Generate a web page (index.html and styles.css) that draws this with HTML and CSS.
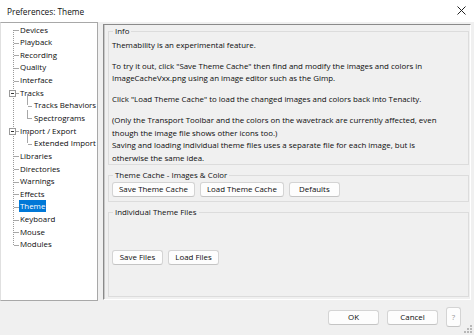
FILE: index.html
```html
<!DOCTYPE html>
<html>
<head>
<meta charset="utf-8">
<link rel="stylesheet" href="styles.css">
</head>
<body>
<div class="window">
  <div class="titlebar">
    <span class="title">Preferences: Theme</span>
    <svg class="close" width="9" height="9" viewBox="0 0 9 9"><path d="M0.5 0.5 L8.5 8.5 M8.5 0.5 L0.5 8.5" stroke="#222" stroke-width="1" fill="none"/></svg>
  </div>
  <div class="main">
    <div class="tree">
      <div class="list">
        <div class="item"><span class="lbl">Devices</span></div>
        <div class="item"><span class="lbl">Playback</span></div>
        <div class="item"><span class="lbl">Recording</span></div>
        <div class="item"><span class="lbl">Quality</span></div>
        <div class="item"><span class="lbl">Interface</span></div>
        <div class="item parent"><span class="box"></span><span class="lbl">Tracks</span></div>
        <div class="kids">
          <div class="item kid"><span class="lbl">Tracks Behaviors</span></div>
          <div class="item kid"><span class="lbl">Spectrograms</span></div>
        </div>
        <div class="item parent"><span class="box"></span><span class="lbl">Import / Export</span></div>
        <div class="kids">
          <div class="item kid"><span class="lbl">Extended Import</span></div>
        </div>
        <div class="item"><span class="lbl">Libraries</span></div>
        <div class="item"><span class="lbl">Directories</span></div>
        <div class="item"><span class="lbl">Warnings</span></div>
        <div class="item"><span class="lbl">Effects</span></div>
        <div class="item"><span class="lbl sel">Theme</span></div>
        <div class="item"><span class="lbl">Keyboard</span></div>
        <div class="item"><span class="lbl">Mouse</span></div>
        <div class="item last"><span class="lbl">Modules</span></div>
      </div>
    </div>
    <div class="panel">
      <fieldset class="group info">
        <legend>Info</legend>
        <p class="gap">Themability is an experimental feature.</p>
        <p class="gap">To try it out, click "Save Theme Cache" then find and modify the images and colors in<br>ImageCacheVxx.png using an image editor such as the Gimp.</p>
        <p class="gap">Click "Load Theme Cache" to load the changed images and colors back into Tenacity.</p>
        <p class="tight">(Only the Transport Toolbar and the colors on the wavetrack are currently affected, even<br>though the image file shows other icons too.)</p>
        <p>Saving and loading individual theme files uses a separate file for each image, but is<br>otherwise the same idea.</p>
      </fieldset>
      <fieldset class="group cache">
        <legend>Theme Cache - Images &amp; Color</legend>
        <div class="btnrow">
          <button class="btn">Save Theme Cache</button>
          <button class="btn">Load Theme Cache</button>
          <button class="btn">Defaults</button>
        </div>
      </fieldset>
      <fieldset class="group files">
        <legend>Individual Theme Files</legend>
        <div class="btnrow">
          <button class="btn">Save Files</button>
          <button class="btn">Load Files</button>
        </div>
      </fieldset>
    </div>
  </div>
  <div class="footer">
    <button class="btn dlg">OK</button>
    <button class="btn dlg">Cancel</button>
    <button class="btn help">?</button>
    <span class="grip"></span>
  </div>
</div>
</body>
</html>
```
FILE: styles.css
```css
html, body {
  margin: 0;
  padding: 0;
}
body {
  width: 474px;
  height: 335px;
  overflow: hidden;
  background: #f0f0f0;
  font-family: "Open Sans", "Noto Sans", sans-serif;
  font-size: 7.9px;
  color: #0c0c0c;
}
.window {
  display: flex;
  flex-direction: column;
  height: 335px;
}
.titlebar {
  height: 22px;
  background: #ffffff;
  display: flex;
  align-items: center;
  justify-content: space-between;
  padding: 0 8px 0 7px;
  box-sizing: border-box;
}
.title {
  font-size: 8.3px;
  color: #111111;
  padding-top: 1px;
}
.close {
  margin-top: -2px;
}
.main {
  display: flex;
  gap: 5px;
  height: 279px;
}
.tree {
  width: 98px;
  height: 279px;
  box-sizing: border-box;
  background: #ffffff;
  border: 1px solid #a8a8a8;
  border-left-color: #e0e0e0;
}
.list {
  position: relative;
  padding-top: 0.5px;
}
.list::before {
  content: "";
  position: absolute;
  left: 12px;
  top: 7px;
  height: 215px;
  border-left: 1px dotted #9a9a9a;
}
.item {
  position: relative;
  height: 12.65px;
  line-height: 12.65px;
  padding-left: 18px;
  white-space: nowrap;
}
.item::before {
  content: "";
  position: absolute;
  left: 13px;
  top: 6.5px;
  width: 5px;
  border-top: 1px solid #a8a8a8;
}
.kids {
  position: relative;
}
.kids::before {
  content: "";
  position: absolute;
  left: 26px;
  top: -5px;
  height: 11px;
  border-left: 1px solid #a8a8a8;
}
.kids .item:nth-child(2)::after {
  content: "";
  position: absolute;
  left: 26px;
  top: -2px;
  height: 9px;
  border-left: 1px solid #a8a8a8;
}
.item.kid {
  padding-left: 32px;
}
.item.kid::before {
  left: 27px;
  width: 4px;
}
.box {
  position: absolute;
  left: 8px;
  top: 3px;
  width: 7px;
  height: 7px;
  box-sizing: border-box;
  border: 1px solid #9a9a9a;
  background: #ffffff;
  z-index: 1;
}
.box::after {
  content: "";
  position: absolute;
  left: 1px;
  top: 2px;
  width: 3px;
  border-top: 1px solid #333;
}
.lbl {
  padding: 0 1px;
  display: inline-block;
  line-height: 12px;
}
.lbl.sel {
  background: #0078d7;
  color: #ffffff;
}
.panel {
  margin-top: 2px;
  width: 368px;
  height: 276px;
  box-sizing: border-box;
  border: 1px solid;
  border-color: #8a8a8a #ffffff #ffffff #8a8a8a;
  box-shadow: inset 1px 0 0 #c8c8c8;
  padding: 1px 1px 2px 4px;
  display: flex;
  flex-direction: column;
  gap: 5px;
}
.group {
  margin: 0;
  border: 1px solid #dcdcdc;
  padding: 0 3px;
  min-width: 0;
}
.group legend {
  padding: 0 2px;
  margin-left: 1px;
  line-height: 11px;
  color: #111111;
}
.info {
  padding-top: 2px;
  padding-bottom: 0;
}
.info p {
  margin: 0;
  line-height: 12.3px;
  white-space: nowrap;
}
.info p.gap {
  margin-bottom: 8.7px;
}
.info p.tight {
  margin-bottom: 0.6px;
}
.cache {
  padding-top: 1px;
  padding-bottom: 4px;
}
.files {
  flex: 1;
  display: flex;
  align-items: center;
}
.btnrow {
  display: flex;
  gap: 5px;
}
.btn {
  font-family: inherit;
  font-size: 7.9px;
  color: #0c0c0c;
  height: 15px;
  min-width: 51px;
  padding: 0 6px;
  background: #fdfdfd;
  border: 1px solid #d4d4d4;
  border-bottom-color: #c4c4c4;
  border-radius: 3px;
  line-height: 13px;
}
.footer {
  position: relative;
  flex: 1;
  display: flex;
  justify-content: flex-end;
  align-items: center;
  gap: 8px;
  padding: 0 13px 2px 0;
}
.btn.dlg {
  width: 51px;
}
.btn.help {
  min-width: 0;
  width: 15px;
  height: 20px;
  padding: 0;
  color: #9a9a9a;
}
.grip {
  position: absolute;
  right: 2px;
  bottom: 2px;
  width: 2px;
  height: 2px;
  background: #b8b8b8;
  box-shadow: -3px 0 #b8b8b8, 0 -3px #b8b8b8, -6px 0 #b8b8b8, -3px -3px #b8b8b8, 0 -6px #b8b8b8;
}
```
